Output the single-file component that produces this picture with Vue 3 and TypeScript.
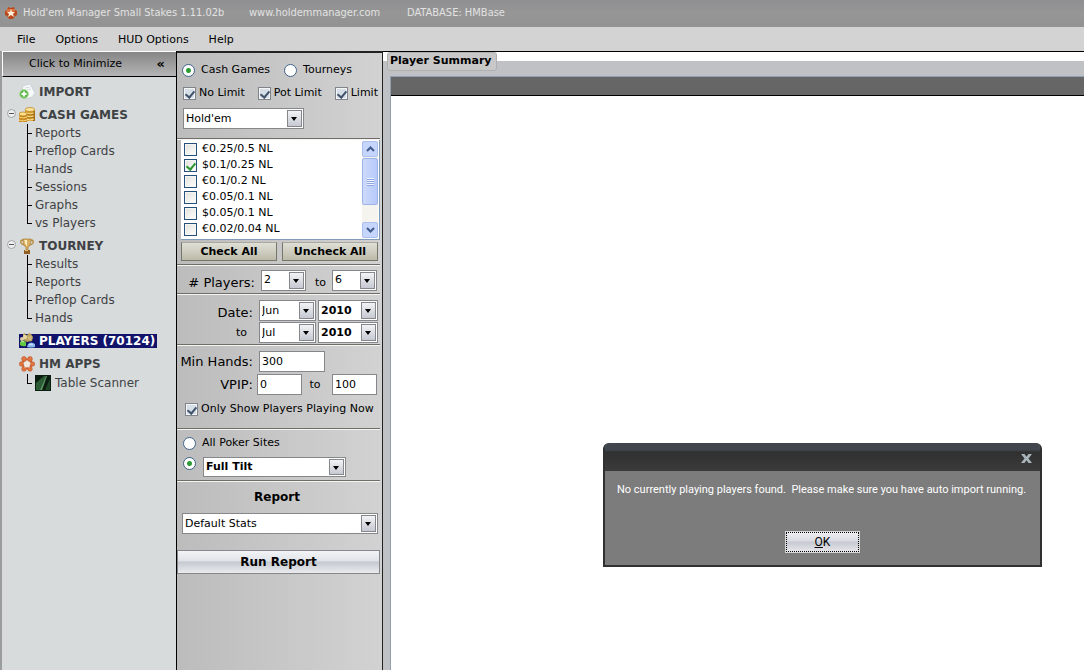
<script setup lang="ts">
import { ref } from 'vue'

interface Stake { label: string; checked: boolean }
interface Group { id: string; label: string; children: string[]; collapsible: boolean; selected?: boolean }

const menus = ['File', 'Options', 'HUD Options', 'Help']

const groups: Group[] = [
  { id: 'import', label: 'IMPORT', children: [], collapsible: false },
  { id: 'cash', label: 'CASH GAMES', children: ['Reports', 'Preflop Cards', 'Hands', 'Sessions', 'Graphs', 'vs Players'], collapsible: true },
  { id: 'tourney', label: 'TOURNEY', children: ['Results', 'Reports', 'Preflop Cards', 'Hands'], collapsible: true },
  { id: 'players', label: 'PLAYERS (70124)', children: [], collapsible: false, selected: true },
  { id: 'apps', label: 'HM APPS', children: ['Table Scanner'], collapsible: false },
]

const stakes = ref<Stake[]>([
  { label: '€0.25/0.5 NL', checked: false },
  { label: '$0.1/0.25 NL', checked: true },
  { label: '€0.1/0.2 NL', checked: false },
  { label: '€0.05/0.1 NL', checked: false },
  { label: '$0.05/0.1 NL', checked: false },
  { label: '€0.02/0.04 NL', checked: false },
])

const gameKind = ref('cash')
const limits = ref([
  { label: 'No Limit', checked: true },
  { label: 'Pot Limit', checked: true },
  { label: 'Limit', checked: true },
])
const siteMode = ref('one')
const minHands = ref('300')
const vpipFrom = ref('0')
const vpipTo = ref('100')
const onlyPlaying = ref(true)
const dialogOpen = ref(true)

function setAll(value: boolean) {
  stakes.value.forEach((s) => { s.checked = value })
}
</script>

<template>
  <div class="app">
    <header class="titlebar">
      <svg class="logo" viewBox="0 0 14 14" aria-hidden="true">
        <path d="M4 1 7 2 10 1 11 4 13 5 13 9 11 10 9 13 5 13 3 10 1 9 1 5 3 4Z" fill="#b8481c" />
        <path d="M3 3 7 3 11 3 11 5 9 6 5 6 2 6Z" fill="#dd7440" />
        <path d="M7 3 8 6 11 6 9 8 10 11 7 9 4 11 5 8 3 6 6 6Z" fill="#fff0dc" />
      </svg>
      <span class="t1">Hold'em Manager Small Stakes 1.11.02b</span>
      <span class="t2">www.holdemmanager.com</span>
      <span class="t3">DATABASE: HMBase</span>
    </header>

    <nav class="menubar" aria-label="Main menu">
      <button v-for="m in menus" :key="m" type="button">{{ m }}</button>
    </nav>

    <div class="body">
      <aside class="sidebar">
        <button type="button" class="minimize"><span>Click to Minimize</span><b>«</b></button>
        <ul class="tree">
          <li v-for="g in groups" :key="g.id" class="group">
            <div class="node">
              <span class="toggle">
                <svg v-if="g.collapsible" viewBox="0 0 9 9" aria-hidden="true">
                  <circle cx="4.500" cy="4.500" r="4" fill="#eef0f0" stroke="#a0a4a5" />
                  <path d="M2 4.500H7" stroke="#555" />
                </svg>
              </span>
              <a href="#" class="head" :class="{ selected: g.selected }">
                <svg viewBox="0 0 16 16" aria-hidden="true">
                  <g v-if="g.id === 'import'">
                    <path d="M4 2 11 0 16 9 13 13 6 15 2 11Z" fill="#f7fafb" stroke="#c3ccd0" stroke-width=".7" />
                    <path d="M6 4 11 3M8 6 12 5" stroke="#d3dadd" />
                    <circle cx="5" cy="10" r="4.300" fill="#62b84c" stroke="#9bd488" />
                    <path d="M5 7.500V12.500M2.500 10H7.500" stroke="#fff" stroke-width="1.800" />
                  </g>
                  <g v-else-if="g.id === 'cash'">
                    <path d="M6 2H16V14H6Z" fill="#d59b2b" />
                    <path d="M14 3H16V14H14Z" fill="#a76c14" />
                    <ellipse cx="11" cy="2.500" rx="4.800" ry="2" fill="#fbe49a" stroke="#b87c1c" stroke-width=".7" />
                    <path d="M7 6Q11 8 15 6M7 9Q11 11 15 9M7 12Q11 14 15 12" stroke="#f9e39c" fill="none" />
                    <path d="M7 7Q11 9 15 7M7 10Q11 12 15 10" stroke="#97620e" fill="none" stroke-width=".7" />
                    <path d="M0 7H8V15H0Z" fill="#c9871d" />
                    <ellipse cx="4" cy="7" rx="4" ry="2" fill="#fbdf89" stroke="#b87c1c" stroke-width=".7" />
                    <path d="M0 10Q4 12 8 10M0 13Q4 15 8 13" stroke="#f6d982" fill="none" />
                  </g>
                  <g v-else-if="g.id === 'tourney'">
                    <path d="M4 2Q1 2 2 5Q3 7 6 7M12 2Q15 2 14 5Q13 7 10 7" fill="none" stroke="#b98a3e" stroke-width="1.400" />
                    <path d="M4 1H12Q12 8 9 9V12H7V9Q4 8 4 1Z" fill="#d9b063" stroke="#a37227" stroke-width=".6" />
                    <path d="M5.500 2H8V8Q6 7 5.500 2Z" fill="#fff0c1" />
                    <path d="M5 12H11V16H5Z" fill="#8f5f24" />
                    <path d="M6 12H9V13H6Z" fill="#e2bd7b" />
                  </g>
                  <g v-else-if="g.id === 'players'">
                    <path d="M4 1 6 0 7 3 10 0 12 1 14 4 13 8 8 9 4 7Z" fill="#b7a05b" />
                    <circle cx="6" cy="4" r="2.200" fill="#e5d6a2" />
                    <circle cx="11" cy="5" r="2.300" fill="#cdb878" />
                    <circle cx="3" cy="6" r="2" fill="#ddd0a4" />
                    <path d="M1 9Q4 6 7 9L7 13Q3 14 1 12Z" fill="#62c83f" />
                    <path d="M2 9Q4 8 5 9" stroke="#c5f3aa" fill="none" />
                    <path d="M9 11Q12 8 16 11V14Q12 15 8 14Z" fill="#88b6ef" />
                    <path d="M10 12Q12 10 14 12" stroke="#dceafd" fill="none" />
                  </g>
                  <g v-else>
                    <circle cx="8" cy="8" r="4.500" fill="none" stroke="#d66631" stroke-width="2" />
                    <g fill="#df7542" stroke="#c05523" stroke-width=".6">
                      <circle cx="5" cy="3" r="2.400" /><circle cx="11" cy="3" r="2.400" />
                      <circle cx="13.500" cy="8" r="2.200" /><circle cx="2.500" cy="8" r="2.200" />
                      <circle cx="5" cy="13" r="2.300" /><circle cx="11" cy="13" r="2.300" />
                    </g>
                    <path d="M8 4 9.500 6.500 12 7 10 9 10.500 12 8 10.500 5.500 12 6 9 4 7 6.500 6.500Z" fill="#f4e8df" />
                  </g>
                </svg>
                <span>{{ g.label }}</span>
              </a>
            </div>
            <ul v-if="g.children.length" class="kids">
              <li v-for="c in g.children" :key="c" :class="{ tall: g.id === 'apps' }">
                <span class="branch"></span>
                <svg v-if="g.id === 'apps'" class="scan" viewBox="0 0 16 16" aria-hidden="true">
                  <rect width="16" height="16" fill="#0b1d10" />
                  <path d="M1 15V8L9 1H11L5 15Z" fill="#2c5c35" />
                  <path d="M5 15 11 1 12 1 7 15Z" fill="#5f9a66" />
                  <path d="M10 15 15 4V15Z" fill="#1d4727" />
                </svg>
                <a href="#">{{ c }}</a>
              </li>
            </ul>
          </li>
        </ul>
      </aside>

      <form class="filters" @submit.prevent>
        <section class="s-game">
          <div class="row kinds">
            <label><input v-model="gameKind" type="radio" name="kind" value="cash"><span>Cash Games</span></label>
            <label><input v-model="gameKind" type="radio" name="kind" value="tourney"><span>Tourneys</span></label>
          </div>
          <div class="row limits">
            <label v-for="l in limits" :key="l.label"><input v-model="l.checked" type="checkbox"><span>{{ l.label }}</span></label>
          </div>
          <span class="combo game"><select aria-label="Game"><option>Hold'em</option></select><i></i></span>
        </section>

        <section class="s-stakes">
          <div class="list">
            <div class="items">
              <label v-for="s in stakes" :key="s.label"><input v-model="s.checked" type="checkbox" class="flat"><span>{{ s.label }}</span></label>
            </div>
            <div class="scroll">
              <button type="button" aria-label="Scroll up"><svg viewBox="0 0 9 6"><path d="M1 5 4.500 1.500 8 5" fill="none" stroke="#3f5a8c" stroke-width="2" /></svg></button>
              <div class="thumb"><span></span></div>
              <button type="button" class="down" aria-label="Scroll down"><svg viewBox="0 0 9 6"><path d="M1 1 4.500 4.500 8 1" fill="none" stroke="#3f5a8c" stroke-width="2" /></svg></button>
            </div>
          </div>
          <div class="pair">
            <button type="button" @click="setAll(true)">Check All</button>
            <button type="button" @click="setAll(false)">Uncheck All</button>
          </div>
        </section>

        <section class="s-players">
          <label for="pfrom" class="cap"># Players:</label>
          <span class="combo pl"><select id="pfrom"><option>2</option></select><i></i></span>
          <label for="pto" class="to">to</label>
          <span class="combo pl"><select id="pto"><option>6</option></select><i></i></span>
        </section>

        <section class="s-date">
          <label for="m1" class="cap">Date:</label>
          <span class="combo"><select id="m1"><option>Jun</option></select><i></i></span>
          <span class="combo bold"><select aria-label="From year"><option>2010</option></select><i></i></span>
          <label for="m2" class="to">to</label>
          <span class="combo"><select id="m2"><option>Jul</option></select><i></i></span>
          <span class="combo bold"><select aria-label="To year"><option>2010</option></select><i></i></span>
        </section>

        <section class="s-hands">
          <div class="line"><label for="mh" class="cap">Min Hands:</label><input id="mh" v-model="minHands" type="text" class="w66"></div>
          <div class="line vp">
            <label for="v1" class="cap">VPIP:</label><input id="v1" v-model="vpipFrom" type="text">
            <label for="v2" class="to">to</label><input id="v2" v-model="vpipTo" type="text">
          </div>
          <label class="only"><input v-model="onlyPlaying" type="checkbox"><span>Only Show Players Playing Now</span></label>
        </section>

        <section class="s-site">
          <label><input v-model="siteMode" type="radio" name="site" value="all"><span>All Poker Sites</span></label>
          <div class="site">
            <input v-model="siteMode" type="radio" name="site" value="one" aria-label="Selected site">
            <span class="combo bold"><select aria-label="Poker site"><option>Full Tilt</option></select><i></i></span>
          </div>
        </section>

        <section class="s-report">
          <label for="rep">Report</label>
          <span class="combo"><select id="rep"><option>Default Stats</option></select><i></i></span>
        </section>

        <button type="submit" class="run">Run Report</button>
      </form>

      <main class="summary">
        <div class="tabs"><h1>Player Summary</h1></div>
        <div class="sheet"><div class="bar"></div></div>
      </main>
    </div>

    <div v-if="dialogOpen" class="dialog" role="dialog" aria-labelledby="msg">
      <div class="dhead">
        <button type="button" aria-label="Close" @click="dialogOpen = false">
          <svg viewBox="0 0 11 9" aria-hidden="true"><path d="M0 0H3.500L5.500 2.800 7.500 0H11L7.500 4.500 11 9H7.500L5.500 6.200 3.500 9H0L3.500 4.500Z" fill="#a9b4bb" /></svg>
        </button>
      </div>
      <div class="dbody">
        <p id="msg">No currently playing players found.&nbsp; Please make sure you have auto import running.</p>
        <button type="button" class="ok" @click="dialogOpen = false"><u>O</u>K</button>
      </div>
    </div>
  </div>
</template>

<style>
html, body { margin: 0; height: 100%; }
#app { height: 100%; }
</style>

<style scoped>
* { box-sizing: border-box; }
.app {
  position: relative; display: flex; flex-direction: column; min-height: 100%; overflow: hidden;
  font: 11px/16px "DejaVu Sans", Verdana, sans-serif; color: #000; background: #fff;
}
ul, p, h1 { margin: 0; padding: 0; list-style: none; }
a { color: inherit; text-decoration: none; }
button, input, select { font: inherit; color: inherit; margin: 0; }
button { cursor: pointer; }

.titlebar {
  display: flex; align-items: center; height: 27px; padding: 0 4px 2px; color: #e2e2e2;
  background: linear-gradient(#8f8f92, #969696 50%, #929292);
  font-family: "DejaVu Sans Condensed", "DejaVu Sans", Tahoma, sans-serif;
}
.logo { width: 14px; height: 14px; margin-right: 5px; }
.t1 { width: 226px; white-space: nowrap; }
.t2 { width: 158px; }

.menubar { display: flex; align-items: center; gap: 20px; height: 24px; padding: 2px 0 0 17px; background: #d3d3d3; }
.menubar button { padding: 0; border: 0; background: none; }

.body { display: flex; flex: 1; }
.sidebar { width: 177px; flex: none; background: #d7dbdc; border-left: 2px solid #9a9c9d; border-right: 1px solid #000; }
.minimize {
  display: flex; align-items: center; justify-content: space-between; width: 100%; height: 26px; padding: 0 11px 0 26px;
  border: 1px solid #fff; border-right: 0; border-bottom: 1px solid #000; background: linear-gradient(#858585, #b5b5b5);
}
.minimize b { font-size: 13px; }
.tree { padding: 6px 0 0; font-size: 12px; line-height: 18px; color: #3f4245; }
.group { margin-bottom: 5px; }
.node { display: flex; height: 18px; }
.toggle { width: 17px; padding: 3px 0 0 5px; }
.toggle svg { display: block; width: 9px; height: 9px; }
.head { display: flex; align-items: center; gap: 4px; height: 18px; font-weight: bold; white-space: nowrap; }
.head svg { width: 16px; height: 16px; }
.head.selected { height: 14px; margin-top: 2px; padding-right: 2px; background: #11136b; color: #fff; }
.kids li { display: flex; height: 18px; padding-left: 25px; white-space: nowrap; }
.kids li.tall { height: 20px; align-items: center; }
.branch {
  width: 5px; height: 18px; margin-right: 3px;
  background: linear-gradient(#000, #000) 0 0 / 1px 100% no-repeat, linear-gradient(#000, #000) 0 9px / 5px 1px no-repeat;
}
.kids li:last-child .branch { background-size: 1px 9px, 5px 1px; }
.scan { width: 16px; height: 16px; margin-right: 4px; }

.filters {
  display: flex; flex-direction: column; width: 206px; flex: none; padding-right: 2px;
  border-top: 2px solid #222; border-right: 1px solid #222;
  background: linear-gradient(90deg, #bcbcbc, #d2d2d2);
}
.filters label { display: flex; align-items: center; white-space: nowrap; }
section { border-bottom: 1px solid #f5f5f5; box-shadow: inset 0 -1px #6f6d66; }
.combo { position: relative; display: block; height: 21px; }
.combo select {
  display: block; appearance: none; width: 100%; height: 100%; padding: 0 18px 0 2px;
  border: 1px solid #85878a; border-radius: 0; background: #fff;
}
.combo i {
  position: absolute; right: 2px; top: 2px; bottom: 2px; width: 15px; pointer-events: none; border: 1px solid #85878a;
  background: linear-gradient(#f2f3f6, #c6c9d2);
}
.combo i::after { content: ""; position: absolute; left: 3px; top: 6px; border: 4px solid transparent; border-width: 4px 3px 0; border-top-color: #000; }
.bold select { font-weight: bold; }

input[type="radio"], input[type="checkbox"] { appearance: none; flex: none; width: 13px; height: 13px; }
input[type="radio"] { border: 1px solid #42658a; border-radius: 50%; background: #fff; }
input[type="radio"]:checked { background: radial-gradient(circle, #2c9a35 0 2px, #fff 3px); }
input[type="checkbox"] { border: 1px solid #7f858b; background: #d6dfe8; box-shadow: inset 0 0 0 1px #f4f6f8; }
input[type="checkbox"]::before { content: ""; display: block; width: 4px; height: 7px; margin: 1px 0 0 3px; border: solid #42546b; border-width: 0 2px 2px 0; transform: rotate(40deg); visibility: hidden; }
input[type="checkbox"]:checked::before { visibility: visible; }
input.flat { border-color: #27507a; background: linear-gradient(135deg, #e0e0da, #fff); }
input.flat::before { border-color: #2c9632; }
input[type="text"] { width: 45px; height: 21px; padding: 0 2px; border: 1px solid #85878a; background: #fff; }

.s-game { height: 87px; padding: 9px 0 0 5px; }
.kinds { display: flex; gap: 14px; height: 16px; }
.kinds label { gap: 6px; }
.limits { display: flex; justify-content: space-between; height: 16px; margin: 7px 2px 7px 1px; }
.limits label { gap: 3px; }
.game { width: 121px; margin-left: 1px; }

.s-stakes { height: 126px; padding: 0 0 0 4px; }
.list { display: flex; width: 199px; height: 100px; padding: 1px 1px 1px 3px; background: #fff; border-right: 1px solid #7f9db9; border-bottom: 1px solid #7f9db9; }
.items { flex: 1; display: flex; flex-direction: column; }
.items label { height: 16px; gap: 5px; }
.scroll { width: 16px; display: flex; flex-direction: column; background: #f5f4ef; }
.scroll button { display: grid; place-items: center; height: 16px; padding: 0; border: 1px solid #aebfee; border-radius: 2px; background: #c5d5fb; }
.scroll button svg { width: 9px; height: 6px; }
.scroll .down { margin-top: auto; }
.thumb { display: grid; place-items: center; height: 47px; margin-top: 1px; border: 1px solid #9db2e6; border-radius: 2px; background: linear-gradient(90deg, #cddafc, #b6c9fa); }
.thumb span { width: 7px; height: 8px; background: repeating-linear-gradient(#eef3ff 0 1px, #8ea7e0 1px 2px); }
.pair { display: grid; grid-template-columns: 96px 96px; gap: 5px; margin-top: 2px; }
.pair button { height: 19px; padding: 0; font-weight: bold; white-space: nowrap; border: 1px solid #77766c; border-top-color: #aaa99f; background: linear-gradient(#e0dfd6, #bcbba9); }

.filters .cap { font-size: 13px; justify-content: flex-end; }
.s-players { display: flex; align-items: center; height: 29px; padding-left: 15px; }
.s-players label { align-self: flex-end; height: 22px; }
.s-players .cap { width: 63px; }
.s-players .combo { width: 45px; margin-left: 6px; }
.s-players .to { width: 20px; justify-content: flex-end; }

.s-date { display: grid; grid-template-columns: 76px 57px 59px; grid-auto-rows: 21px; gap: 1px 2px; height: 51px; padding: 5px 0 0; }
.s-date { grid-template-columns: 80px 57px 60px; }
.s-date .cap { padding: 4px 4px 0 0; }
.s-date .to { justify-content: flex-end; padding-right: 10px; }

.s-hands { height: 84px; padding-top: 5px; }
.line { display: flex; align-items: center; height: 21px; margin-bottom: 2px; }
.line .cap { width: 76px; margin-right: 6px; }
.vp .cap { margin-right: 4px; }
.vp .to { width: 30px; padding-right: 4px; justify-content: center; }
.line input.w66 { width: 66px; }
.filters .only { gap: 3px; height: 16px; margin: 6px 0 0 8px; }

.s-site { height: 52px; padding: 5px 0 0 6px; }
.s-site label { gap: 6px; height: 16px; }
.site { display: flex; gap: 7px; margin-top: 6px; }
.site .combo { width: 143px; height: 20px; }

.s-report { display: flex; flex-direction: column; height: 68px; padding: 7px 2px 0 5px; border: 0; box-shadow: none; }
.s-report label { justify-content: center; margin-bottom: 8px; padding-right: 6px; font-size: 12px; font-weight: bold; }
.s-report .combo { width: 196px; }
.run { height: 24px; padding: 0; border: 1px solid #85878a; font-size: 12px; font-weight: bold; background: linear-gradient(#f2f4f6, #e0e3e8 45%, #c5c9d0 50%, #e9ebee); }

.summary { flex: 1; display: flex; flex-direction: column; padding-left: 7px; background: linear-gradient(#fff 0 9px, #bfc1c4 9px); border-top: 1px solid #000; }
.tabs { height: 24px; margin-left: -3px; }
.tabs h1 { display: inline-block; height: 19px; padding: 0 4px 0 2px; font-size: 11px; line-height: 16px; background: #c8c8c8; border: 1px solid #b0b0b0; border-radius: 3px; white-space: nowrap; }
.sheet { flex: 1; background: #fff; border-left: 1px solid #8fa0b4; border-top: 1px solid #8fa0b4; }
.bar { height: 19px; background: #666; border-bottom: 1px solid #000; }

.dialog { position: absolute; right: 42px; bottom: 103px; width: 439px; border: 2px solid #2f3032; border-top: 0; border-radius: 6px 6px 0 0; background: #7c7c7c; overflow: hidden; }
.dhead { display: flex; justify-content: flex-end; align-items: center; height: 28px; padding: 3px 8px 0 0; background: linear-gradient(#41454d 0 7px, #303030 9px, #3b3b3b); }
.dhead button { padding: 0; border: 0; background: none; }
.dhead svg { display: block; width: 11px; height: 9px; }
.dbody { display: flex; flex-direction: column; align-items: center; height: 94px; padding-top: 11px; font-family: Roboto, "Liberation Sans", Arial, sans-serif; }
.dbody p { align-self: flex-start; margin-left: 12px; color: #fff; white-space: nowrap; }
.ok { width: 75px; height: 22px; margin-top: 33px; padding: 0; border: 1px solid #d8d8d8; outline: 1px dotted #000; outline-offset: -2px; font-size: 12px; background: linear-gradient(#f0f0f2, #d9dbe2 45%, #c6c9d2 50%, #e8e8ec); }
</style>
